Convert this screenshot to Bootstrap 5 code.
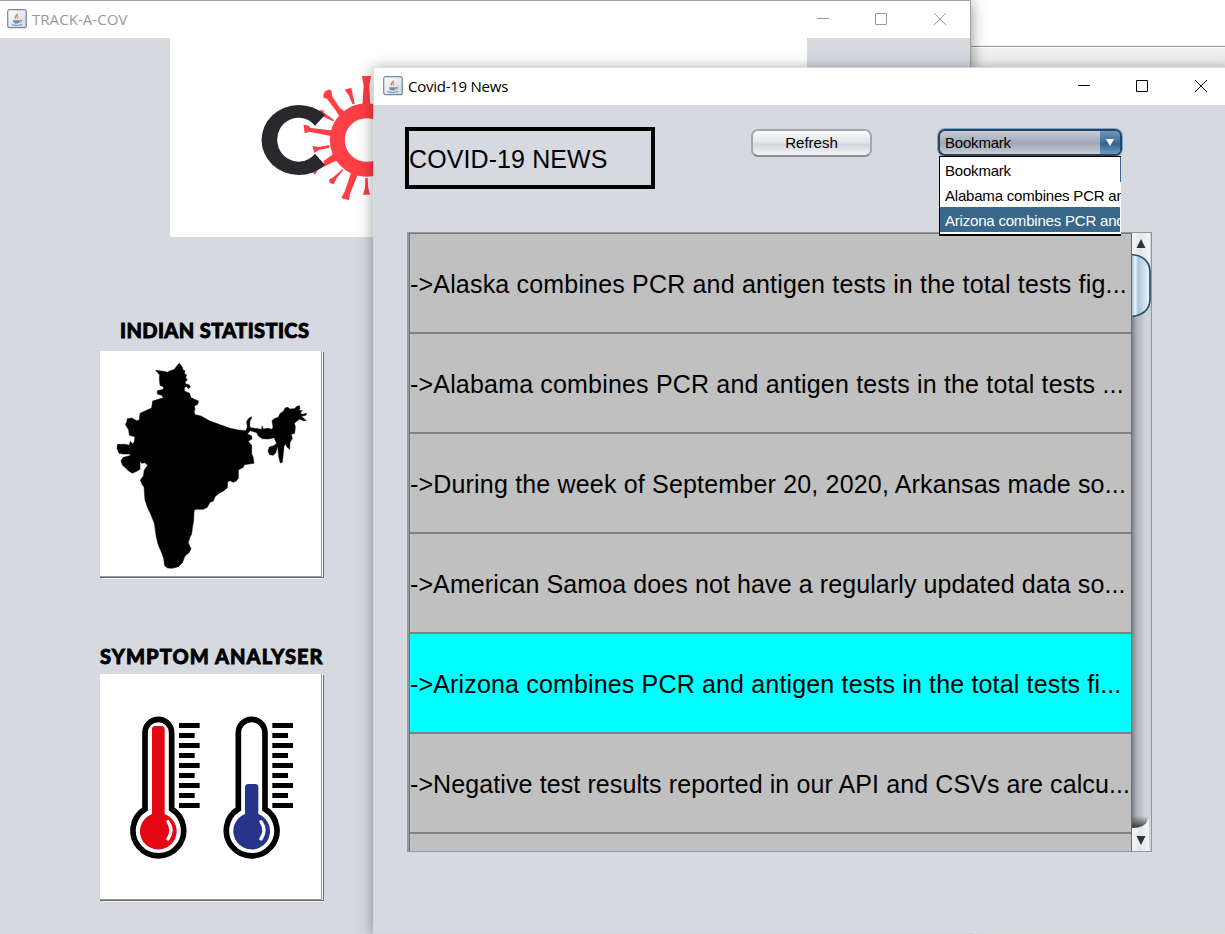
<!DOCTYPE html>
<html lang="en">
<head>
<meta charset="utf-8">
<title>Covid-19 News</title>
<link href="https://cdn.jsdelivr.net/npm/bootstrap@5.3.0/dist/css/bootstrap.min.css" rel="stylesheet">
<style>
body{height:934px;background:#fff;font-family:"Liberation Sans",Arial,sans-serif;color:#000}
.desk{width:1225px;height:934px}
.behind{height:68px;background:linear-gradient(#fefefe 45px,#f0f0f0 45px,#f0f0f0 46px,#999 46px,#999 47px,#fff 47px,#fff 48px,#f0f0f0 48px)}
.win{background:#d6d9e0}
.win-main{left:0;top:0;width:971px;height:940px;border-top:1px solid #a5a5a5;border-right:1px solid #a0a0a0;box-shadow:0 2px 14px rgba(0,0,0,.45)}
.win-news{left:374px;top:68px;width:860px;height:865px;box-shadow:0 0 0 1px rgba(225,225,225,.75),0 2px 15px 1px rgba(0,0,0,.38)}
.titlebar{height:37px;background:#fff;font:15px/37px "Open Sans","Noto Sans",sans-serif;letter-spacing:-.25px}
.win-main .titlebar{color:#999;padding-left:7px;letter-spacing:.05px}
.win-main .titlebar>svg:first-child{margin-top:-2px}
.win-news .titlebar{padding-left:9px}
.win-news .titlebar>svg:first-child{margin-top:-2px}
.ttl{margin-left:5px}
.logo-panel{margin-left:170px;width:637px;height:199px;background:#fff}
.logo{left:240px;top:59px}
.side{margin-left:100px;width:224px}
.cap{font:900 20px/24px Lato,sans-serif;-webkit-text-stroke:.8px #000;white-space:nowrap;height:24px}
.cap-stats{margin:81px 0 0 20px;letter-spacing:.38px}
.cap-symptom{margin-top:67px;letter-spacing:1.07px}
.tile{width:222px;height:226px;background:#fff;border-right:1px solid #999;border-bottom:1px solid #999;box-shadow:1px 0 #fff,2px 1px #6c6c70,0 1px #6c6c70,2px 2px #f4f4f6}
.tile svg{display:block}
.newslabel{width:250px;height:62px;border:4px solid #000;font-size:25px;line-height:56px;margin-left:31px;letter-spacing:.1px;white-space:nowrap}
.nbtn{margin-left:96px;width:121px;height:28px;border:2px solid #a4a7ad;border-bottom-color:#8b8e93;border-radius:7px;background:linear-gradient(#fafbfb,#e2e4e7 48%,#d3d6db 56%,#f4f5f7);font-size:15px;line-height:24px;padding:0;margin-top:2px}
.combo{margin-left:66px;width:184px;height:28px;margin-top:2px}
.combo-face{height:27px;border:2px solid #28435c;border-radius:7px;box-shadow:0 0 0 1px #78a6cf;background:linear-gradient(#c6cbd6,#a5adbc 45%,#a0a8b7 55%,#c8cdd6);font-size:15px;line-height:24px;padding-left:5px;overflow:hidden;letter-spacing:-.2px}
.arrow{width:20px;background:linear-gradient(#7097b8,#40709a 48%,#33648f 55%,#6d9dc4)}
.popup{left:1px;top:27px;width:182px;height:80px;background:#fff;border:1px solid #000;border-right:0;border-bottom-width:2px;font-size:15px;z-index:3;overflow:hidden;letter-spacing:-.2px}
.opt{height:25px;line-height:27px;padding-left:5px;white-space:nowrap;overflow:hidden}
.opt:first-child{border-right:1px solid #39698a}
.opt.sel{background:#39698a;color:#fff;margin-right:1px}
.news{margin:43px 0 0 33px;width:745px;height:620px;border:1px solid #9297a1;border-left-width:2px}
.rows{width:722px;background:silver;border-left:1px solid #777;border-top:1px solid #777;overflow:hidden;flex:none}
.item{height:100px;line-height:101px;font-size:25px;letter-spacing:.18px;white-space:nowrap;border-bottom:2px solid #808080;flex:none}
.item.tight{letter-spacing:.1px}
.item.on{background:#0ff;letter-spacing:.16px}
.bar svg{display:block}
</style>
</head>
<body>
<div class="desk position-relative overflow-hidden">
<div class="behind"></div>

<section class="win win-main position-absolute">
  <div class="titlebar d-flex align-items-center">
    <svg width="20" height="20" viewBox="0 0 20 20"><use href="#java"/></svg><span class="ttl">TRACK-A-COV</span>
    <svg class="ms-auto" width="153" height="37" fill="none" stroke="#999"><path d="M0 17.500h12M58.500 12.500h11v11h-11zM117 12l12 12M129 12l-12 12"/></svg>
  </div>
  <div class="logo-panel"></div>
  <div class="side d-flex flex-column">
    <div class="cap cap-stats">INDIAN STATISTICS</div>
    <div class="tile" style="margin-top:9px"><svg width="221" height="225" viewBox="15 123 663 675"><path d="M253 160 262 172 264 180 270 182 268 190 275 195 272 203 277 210 270 216 272 222 282 224 286 231 280 236 274 229 268 234 268 243 284 250 287 262 298 268 311 273 308 283 298 288 300 297 297 306 300 314 318 318 345 333 372 343 405 355 430 360 452 362 457 352 455 335 460 326 469 320 470 325 465 332 464 345 466 353 478 355 500 358 501 348 505 357 518 355 532 358 534 350 531 332 540 325 550 322 555 311 566 303 570 294 578 292 585 297 598 296 606 289 613 287 615 295 612 300 618 303 622 300 616 310 622 313 634 310 634 315 620 319 628 327 634 332 625 332 614 327 605 334 598 340 601 350 599 370 589 373 592 386 585 397 584 418 576 411 572 403 567 408 565 430 562 457 556 459 551 440 548 408 542 428 535 436 524 434 519 424 523 411 536 407 545 400 540 390 538 383 520 387 502 386 490 378 485 368 466 362 457 372 470 378 471 387 460 393 464 400 470 405 470 432 474 440 477 460 448 464 445 472 430 480 430 505 424 513 415 517 405 512 398 515 397 533 385 543 372 550 360 560 355 573 345 577 337 592 325 598 300 598 297 605 296 630 292 655 290 672 284 683 280 698 284 708 288 716 282 728 270 738 262 758 250 770 232 775 218 774 209 767 206 745 200 728 190 705 184 682 178 640 168 615 158 593 150 570 147 530 142 525 136 510 145 498 148 480 158 466 150 458 140 460 135 454 135 478 125 484 112 490 100 482 92 474 82 465 78 452 85 442 105 437 106 432 85 432 72 430 66 415 68 403 90 403 103 406 106 394 113 402 118 395 120 380 103 376 101 360 91 343 95 337 97 326 110 324 125 332 133 330 135 310 152 302 170 294 173 273 190 268 205 263 200 256 187 252 187 242 205 238 205 230 195 226 193 205 194 195 182 181 205 184 218 187 222 184 238 178 248 165Z" stroke="#000" stroke-width="1.500"/></svg></div>
    <div class="cap cap-symptom">SYMPTOM ANALYSER</div>
    <div class="tile" style="margin-top:6px"><svg width="221" height="225" viewBox="15 102 663 675">
      <g id="tube"><path d="M150 507V278A40 40 0 0 1 230 278V507A76 76 0 1 1 150 507Z" fill="none" stroke="#000" stroke-width="17"/>
      <path d="M252 249h62v15h-62zM252 279h47v15h-47zM252 309h62v15h-62zM252 339h47v15h-47zM252 369h62v15h-62zM252 399h47v15h-47zM252 429h62v15h-62zM252 459h47v15h-47zM252 489h62v15h-62z"/></g>
      <use href="#tube" x="280"/>
      <path d="M171 522V268q0-10 10-10h18q10 0 10 10V522A55 55 0 1 1 171 522Z" fill="#e30613"/>
      <path d="M450 522V442q0-10 10-10h20q10 0 10 10V522A55 55 0 1 1 450 522Z" fill="#27348b"/>
      <path d="M219 545Q237 571 219 597M498 545Q516 571 498 597" fill="none" stroke="#fff" stroke-width="10" stroke-linecap="round"/>
    </svg></div>
  </div>
  <svg class="logo position-absolute" width="180" height="190" viewBox="0 0 540 570" fill="#ff3e46">
    <path d="M238 152l10-3 5 10 30 22-4 3-34-16zM217 336l12-5 60-56 18 18-72 35-10 16z"/>
    <path d="M255 165A112 105 0 1 0 255 315L225 281A64 66 0 1 1 225 197Z" fill="#29282c"/>
    <path d="M191 194l15 3 5 7 73 8v18l-76-15-14 5z" stroke="#fff" stroke-width="3"/>
    <circle cx="380" cy="240" r="88" fill="none" stroke="#ff3e46" stroke-width="45"/>
    <path d="M366 48h27l-5 30 3 60h-24l4-60zM314 89l20-6 4 20 6 28-7 1-11-26zM250 104l4-9 14-7 7 6 1 14 22 34 30 25-22 16-17-29-28-38-10-2zM191 194l15 3 5 7 73 8v18l-76-15-14 5zM217 258l19 3 32-6v8l-31 7-14 9zM250 304l39-29 18 18-52 18zM267 359l14-8 26-24 2 4-19 24-9 18-12-5zM305 411l9-16 22-66 22 4-27 65-4 22-19-4zM376 354h7l2 30 5 20h-21l6-20z"/>
  </svg>
</section>

<section class="win win-news position-absolute">
  <div class="titlebar d-flex align-items-center">
    <svg width="20" height="20" viewBox="0 0 20 20">
      <defs><linearGradient id="jg" x2="1" y2="1"><stop stop-color="#fff"/><stop offset="1" stop-color="#cfd5dc"/></linearGradient></defs>
      <g id="java"><rect x=".7" y=".7" width="18.600" height="18" rx="2" fill="url(#jg)" stroke="#6d8aa3" stroke-width="1.200"/>
      <path d="M10.500 3.500c.5 2-3.500 2.500-2.800 5 .2.700.9 1.300 1.500 1.900-.2-1.500-.4-2 .8-3 1.300-1 1.500-2.400.5-3.900zM12 6.500c-2 .8-2.500 2-1.300 3.700 1-1.400-.3-2 1.300-3.700z" fill="#ee8430"/>
      <path d="M6 11.200h7q0 2.800-2 3.300H8q-2-.5-2-3.300z" fill="#6f8da8"/><path d="M13 11.300c2.500-.6 2.300 1.500-.3 2M4.500 15.800q5 1.600 10.500-.2" fill="none" stroke="#6f8da8" stroke-width="1"/></g>
    </svg><span class="ttl">Covid-19 News</span>
    <svg class="ms-auto" width="156" height="37" fill="none" stroke="#000"><path d="M0 17.500h12M58.500 12.500h11v11h-11zM117 12l12 12M129 12l-12 12"/></svg>
  </div>
  <div class="d-flex align-items-start" style="padding-top:22px">
    <div class="newslabel">COVID-19 NEWS</div>
    <button class="nbtn">Refresh</button>
    <div class="combo position-relative">
      <div class="combo-face d-flex justify-content-between"><span>Bookmark</span><span class="arrow d-flex justify-content-center"><svg width="10" height="22"><path d="M1 8h8l-4 7z" fill="#fff"/></svg></span></div>
      <div class="popup position-absolute">
        <div class="opt">Bookmark</div><div class="opt">Alabama combines PCR an</div><div class="opt sel">Arizona combines PCR and</div>
      </div>
    </div>
  </div>
  <div class="news d-flex">
    <div class="rows d-flex flex-column">
      <div class="item">-&gt;Alaska combines PCR and antigen tests in the total tests fig...</div>
      <div class="item">-&gt;Alabama combines PCR and antigen tests in the total tests ...</div>
      <div class="item">-&gt;During the week of September 20, 2020, Arkansas made so...</div>
      <div class="item tight">-&gt;American Samoa does not have a regularly updated data so...</div>
      <div class="item on">-&gt;Arizona combines PCR and antigen tests in the total tests fi...</div>
      <div class="item tight">-&gt;Negative test results reported in our API and CSVs are calcu...</div>
      <div class="item"></div>
    </div>
    <div class="bar"><svg width="20" height="618" viewBox="0 0 20 618">
      <defs>
        <linearGradient id="tr"><stop stop-color="#777b82"/><stop offset=".3" stop-color="#aeb2b9"/><stop offset=".75" stop-color="#d2d5da"/><stop offset="1" stop-color="#cfd2d8"/></linearGradient>
        <linearGradient id="th"><stop stop-color="#8eafca"/><stop offset=".22" stop-color="#eef5fa"/><stop offset=".38" stop-color="#a9c5dc"/><stop offset=".8" stop-color="#d5e9f7"/><stop offset="1" stop-color="#e8f6ff"/></linearGradient>
        <linearGradient id="bt"><stop stop-color="#f5f6f7"/><stop offset=".5" stop-color="#e3e6e9"/><stop offset="1" stop-color="#f5f6f8"/></linearGradient>
        <linearGradient id="sh" x2="0" y2="1"><stop stop-color="#444" stop-opacity="0"/><stop offset="1" stop-color="#333"/></linearGradient>
      </defs>
      <path fill="url(#tr)" d="M0 0h20v618H0z"/><path fill="url(#sh)" d="M0 583h17l-3 12H0z"/>
      <path fill="url(#bt)" d="M0 0h19v30L8 22H0zM1 618v-23q13 0 17-9v32z"/>
      <path fill="#333" d="M5.500 15h9l-4.500-9zM5.500 603h9l-4.500 9z"/>
      <path d="M0 21.500C11 22 19 28 19 39V66C19 77 11 83 0 83.500" fill="url(#th)" stroke="#2e4e6a" stroke-width="1.700"/>
      <path d="M.5 0v618" stroke="#6b6d71" stroke-width="1"/>
    </svg></div>
  </div>
</section>
</div>
<script src="https://cdn.jsdelivr.net/npm/bootstrap@5.3.0/dist/js/bootstrap.bundle.min.js"></script>
</body>
</html>
